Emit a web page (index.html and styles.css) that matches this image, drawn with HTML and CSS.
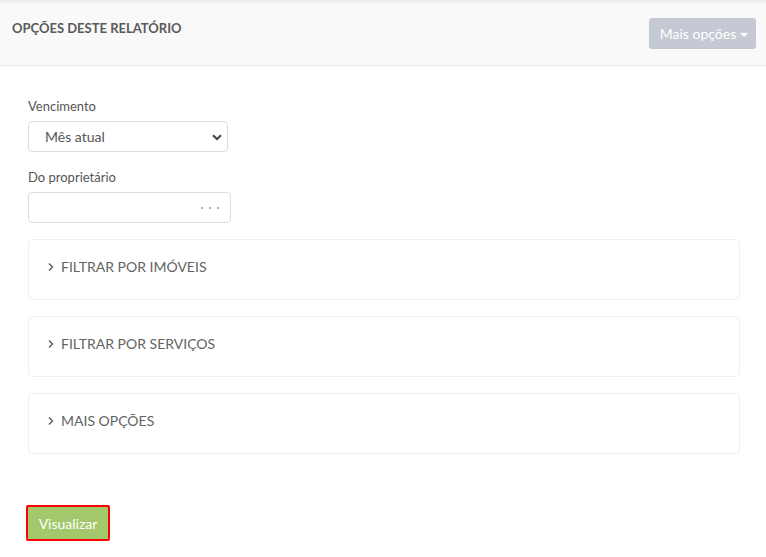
FILE: index.html
```html
<!DOCTYPE html>
<html lang="pt">
<head>
<meta charset="utf-8">
<title>Opções deste relatório</title>
<link rel="stylesheet" href="styles.css">
</head>
<body>
<div class="topstrip"></div>
<header class="header">
  <h1 class="title">OPÇÕES DESTE RELATÓRIO</h1>
  <button class="more-btn" type="button">Mais opções <span class="caret"></span></button>
</header>
<main class="content">
  <div class="field">
    <label class="label">Vencimento</label>
    <div class="select">
      <span>Mês atual</span>
      <svg class="chev" width="10" height="7" viewBox="0 0 10 7"><path d="M1 1.2 L5 5 L9 1.2" fill="none" stroke="#444" stroke-width="2"/></svg>
    </div>
  </div>
  <div class="field">
    <label class="label">Do proprietário</label>
    <div class="input">
      <span class="dots"><i></i><i></i><i></i></span>
    </div>
  </div>
  <div class="panels">
    <div class="panel"><svg class="pchev" width="6" height="10" viewBox="0 0 6 10"><path d="M1 1.5 L4.5 5 L1 8.5" fill="none" stroke="#555" stroke-width="1.3"/></svg>FILTRAR POR IMÓVEIS</div>
    <div class="panel"><svg class="pchev" width="6" height="10" viewBox="0 0 6 10"><path d="M1 1.5 L4.5 5 L1 8.5" fill="none" stroke="#555" stroke-width="1.3"/></svg>FILTRAR POR SERVIÇOS</div>
    <div class="panel"><svg class="pchev" width="6" height="10" viewBox="0 0 6 10"><path d="M1 1.5 L4.5 5 L1 8.5" fill="none" stroke="#555" stroke-width="1.3"/></svg>MAIS OPÇÕES</div>
  </div>
  <div class="actions">
    <button class="submit" type="button">Visualizar</button>
  </div>
</main>
</body>
</html>
```

FILE: styles.css
```css
* { box-sizing: border-box; }
html, body { margin: 0; padding: 0; background: #fff; }
body { font-family: Lato, "Open Sans", Arial, sans-serif; color: #555; }

.topstrip { height: 3px; background: #eef0f4; }

.header {
  height: 63px;
  background: #f9f9f9;
  border-bottom: 1px solid #ececec;
  display: flex;
  justify-content: space-between;
  align-items: flex-start;
  padding: 0 10px 0 12px;
}
.title {
  margin: 16px 0 0;
  font-size: 13px;
  font-weight: 700;
  line-height: 18px;
  color: #5a5a5a;
  letter-spacing: 0;
}
.more-btn {
  margin-top: 15px;
  width: 107px;
  height: 31px;
  border: none;
  border-radius: 3px;
  background: #c5c9d3;
  color: #fff;
  font-family: inherit;
  font-size: 14px;
  padding: 0 0 0 3px;
  display: flex;
  align-items: center;
  justify-content: center;
  gap: 4px;
}
.caret {
  width: 0; height: 0;
  border-left: 4px solid transparent;
  border-right: 4px solid transparent;
  border-top: 4px solid #fff;
  margin-top: 2px;
}

.content { padding: 31px 26px 0 28px; }
.field { margin-bottom: 16px; }
.label {
  display: block;
  font-size: 13px;
  line-height: 18px;
  color: #555;
  margin-bottom: 6px;
}
.select {
  width: 200px;
  height: 31px;
  border: 1px solid #ddd;
  border-radius: 4px;
  display: flex;
  align-items: center;
  justify-content: space-between;
  padding: 0 5px 0 16px;
  font-size: 14px;
  color: #555;
}
.chev { margin-top: 1px; }
.input {
  width: 203px;
  height: 31px;
  border: 1px solid #ddd;
  border-radius: 4px;
  display: flex;
  align-items: center;
  justify-content: flex-end;
  padding-right: 11px;
}
.dots { display: flex; gap: 6px; }
.dots i { width: 2px; height: 2px; border-radius: 50%; background: #999; display: block; }

.panels { display: flex; flex-direction: column; gap: 16px; margin-top: 16px; }
.panel {
  height: 61px;
  border: 1px solid #eceef4;
  border-radius: 4px;
  display: flex;
  align-items: center;
  padding-left: 19px;
  font-size: 14px;
  color: #636363;
  padding-bottom: 6px;
}
.pchev { margin-right: 7px; }

.actions { margin-top: 51px; }
.submit {
  margin-left: -2px;
  width: 84px;
  height: 36px;
  border: 2px solid #f00;
  border-radius: 2px;
  background: #a3c86b;
  color: #fff;
  font-family: inherit;
  font-size: 14px;
  padding: 0;
}
```
